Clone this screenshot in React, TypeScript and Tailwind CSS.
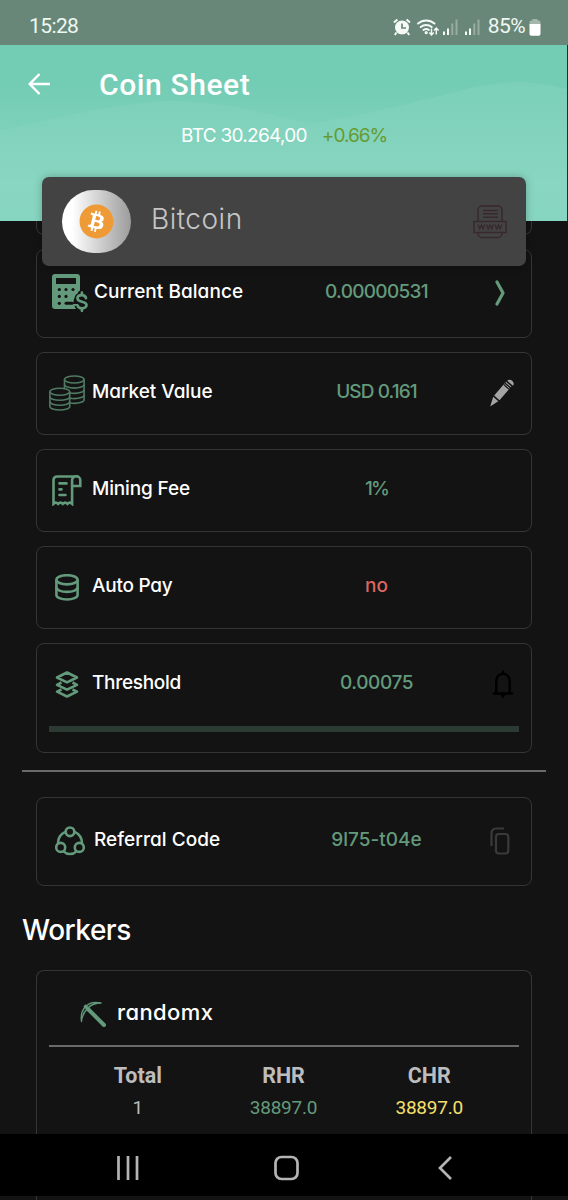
import type { ReactNode } from "react";
import { FaBitcoin } from "react-icons/fa";

const GREEN = "#649a7c";

function CalculatorIcon() {
  return (
    <svg viewBox="0 0 38 40" className="h-10 w-[38px] shrink-0" fill="none">
      <path
        fill={GREEN}
        fillRule="evenodd"
        d="M4 1h22a3 3 0 0 1 3 3v13.500l-2 1.500v3l-4 4-1 5h4v5H4a3 3 0 0 1-3-3V4a3 3 0 0 1 3-3Zm1 4v6h20V5H5Z"
      />
      <g fill="#131313">
        <circle cx="8.300" cy="16.500" r="1.600" />
        <circle cx="15" cy="16.500" r="1.600" />
        <circle cx="22" cy="16.500" r="1.600" />
        <circle cx="8.300" cy="23.400" r="1.600" />
        <circle cx="15" cy="23.400" r="1.600" />
        <circle cx="8.300" cy="30.300" r="1.600" />
        <rect x="13.500" y="28.800" width="9" height="3" rx="1.500" />
      </g>
      <path
        id="dollar"
        stroke="#131313"
        strokeWidth="6"
        d="M35 25.200c-.5-2-2.200-3-4.300-3-2.400 0-4.200 1.300-4.200 3.300 0 4.600 9 1.800 9 6.600 0 2-2 3.300-4.400 3.300-2.300 0-4.200-1-4.700-3.100"
      />
      <path
        stroke={GREEN}
        strokeWidth="2.700"
        strokeLinecap="round"
        d="M35 25.200c-.5-2-2.200-3-4.300-3-2.400 0-4.200 1.300-4.200 3.300 0 4.600 9 1.800 9 6.600 0 2-2 3.300-4.400 3.300-2.300 0-4.200-1-4.700-3.100M30.900 22v-2.300M30.900 35.600v2.200"
      />
    </svg>
  );
}

function CoinsIcon() {
  return (
    <svg viewBox="0 0 36 36" className="size-9" fill="none" stroke="#4f7a62" strokeWidth="1.600">
      <ellipse cx="25.300" cy="4.500" rx="9.800" ry="3.500" />
      <path d="M15.500 4.500V13M35.100 4.500v20.300c0 2-4.400 3.600-9.800 3.600-1.500 0-3-.1-4.300-.4" />
      <path d="M15.500 9.600c0 2 4.400 3.500 9.800 3.500s9.800-1.500 9.800-3.500M21 18c1.300.3 2.800.4 4.300.4 5.400 0 9.800-1.600 9.800-3.600M21 23.200c1.300.3 2.800.4 4.300.4 5.400 0 9.800-1.600 9.800-3.600" />
      <ellipse cx="10.800" cy="16.800" rx="9.900" ry="3.500" />
      <path d="M.9 16.800v14.600C.9 33.400 5.300 35 10.800 35s9.900-1.600 9.900-3.600V16.800" />
      <path d="M.9 21.700c0 2 4.400 3.600 9.900 3.600s9.900-1.600 9.900-3.600M.9 26.600c0 2 4.400 3.600 9.900 3.600s9.900-1.600 9.900-3.600" />
    </svg>
  );
}

function ReceiptIcon() {
  return (
    <svg viewBox="0 0 30 31" className="h-[31px] w-[30px]" fill="none" stroke={GREEN} strokeWidth="2.600">
      <path d="M25 1.500H5a3.500 3.500 0 0 0-3.500 3.500v23.800c1.600-1.600 3-1.600 4.600 0 1.600-1.600 3.100-1.600 4.700 0 1.600-1.600 3.100-1.600 4.700 0 1.500-1.600 3-1.600 4.600 0V5.500a4 4 0 0 1 8.200-.5v6h-8" />
      <path strokeLinecap="round" d="M7.500 8.400h7M7.500 14.400h2M7.500 20h6" />
    </svg>
  );
}

function DatabaseIcon() {
  return (
    <svg viewBox="0 0 24 27" className="h-[27px] w-6" fill="none" stroke={GREEN} strokeWidth="2.600">
      <ellipse cx="12" cy="5.800" rx="10.600" ry="4.600" />
      <path d="M1.400 5.800v15.100c0 2.600 4.700 4.600 10.600 4.600s10.600-2 10.600-4.600V5.800" />
      <path d="M1.400 13.300c0 2.600 4.700 4.600 10.600 4.600s10.600-2 10.600-4.600" />
    </svg>
  );
}

function LayersIcon() {
  return (
    <svg viewBox="0 0 24 27" className="h-[27px] w-6" fill="none" stroke={GREEN} strokeWidth="2.600" strokeLinejoin="round">
      <path d="M12 1.500 22 6.500 12 11.300 2 6.500Z" />
      <path d="M6.500 11.500 2 13.800l10 4.800 10-4.800-4.500-2.300" />
      <path d="M6.500 18.500 2 20.700l10 4.800 10-4.800-4.500-2.200" />
    </svg>
  );
}

function ReferralIcon() {
  return (
    <svg viewBox="0 0 30 30" className="size-[30px]" fill="none" stroke={GREEN} strokeWidth="2.600">
      <circle cx="15" cy="5.800" r="4.300" />
      <circle cx="5.700" cy="21.400" r="4.500" />
      <circle cx="24.300" cy="21.400" r="4.500" />
      <path d="M10.800 5.600C6 7.800 3 12 3 17.200M19.200 5.600C24 7.800 27 12 27 17.200M8.500 25.300c3.500 3.500 9.500 3.500 13 0" />
    </svg>
  );
}

function ChevronIcon() {
  return (
    <svg viewBox="0 0 12 26" className="mr-1 h-[26px] w-3" fill="none" stroke={GREEN} strokeWidth="3.200" strokeLinecap="round" strokeLinejoin="round">
      <path d="M3 2 9 13 3 24" />
    </svg>
  );
}

function PencilIcon() {
  return (
    <svg viewBox="0 0 24 28" className="-mt-0.5 h-7 w-6" fill="#a3a3a3">
      <path d="M.2 27.500 3.200 17.800 8.300 22.200Z" />
      <path d="M4.200 16.500 13.600 5.500 19 10.200 9.500 21.200Z" />
      <path d="m15.300 3.600.7-.8 5.400 4.700-.7.8Z" />
      <path d="M17.200 1.800c2.800-3 8.500 1.500 5.800 4.900Z" />
      <path stroke="#a3a3a3" strokeWidth="1" d="m14.200 4.700 5.400 4.700" />
      <path stroke="#131313" strokeWidth=".9" d="m13.800 6 4.900 4.300M15 4.200l5.200 4.500" />
    </svg>
  );
}

function BellIcon() {
  return (
    <svg viewBox="0 0 22 30" className="-mt-0.5 ml-0.5 h-[30px] w-[22px]" fill="none" stroke="#000" strokeWidth="2.500">
      <path d="M4.300 24V12.800C4.300 7.800 7 4.700 11 4.700s6.700 3.100 6.700 8.100V24" />
      <path strokeLinecap="round" d="M2 24.500h18" />
      <path fill="#000" stroke="none" d="M11 .8 13.300 5H8.700ZM8.300 25.500h5.400L11 29.500Z" />
    </svg>
  );
}

function CopyIcon() {
  return (
    <svg viewBox="0 0 20 28" className="mr-1 h-7 w-5" fill="none" stroke="#3a3a3a" strokeWidth="2.200">
      <rect x="6" y="7" width="12.300" height="19.500" rx="3" />
      <path d="M1.500 19V6a4.500 4.500 0 0 1 4.500-4.500h8" />
    </svg>
  );
}

function WebsiteIcon() {
  return (
    <svg viewBox="0 0 34 34" className="h-[34px] w-[34px]" fill="none" stroke="#38292f" strokeWidth="1.500">
      <path d="M5 16.500V5a4 4 0 0 1 4-4h16a4 4 0 0 1 4 4v11.500M5 27.500v1a4 4 0 0 0 4 4h16a4 4 0 0 0 4-4v-1" />
      <rect x="1" y="16.500" width="32" height="11" />
      <path d="M10 5.500h15M10 8.800h15M10 12.200h15" />
      <path
        strokeWidth="1.300"
        d="m5 19.500 1.700 4.500 1.700-4 1.700 4 1.700-4.500M13.500 19.500l1.700 4.500 1.700-4 1.700 4 1.700-4.500M22 19.500l1.700 4.500 1.700-4 1.700 4 1.700-4.500"
      />
    </svg>
  );
}

function PickaxeIcon() {
  return (
    <svg viewBox="0 0 27 27" className="mt-0.5 size-[27px]" fill="none" stroke={GREEN}>
      <path strokeWidth="4" strokeLinecap="round" d="M7.500 7.500 24 24" />
      <path strokeWidth="1.300" fill="#223a2c" strokeLinejoin="round" d="M1.500 20.500C.5 14 2.500 8.500 5.500 5.500S13.500.5 21 2C15 2 11 4 7.800 7.200S2 14.500 1.500 20.500Z" />
      <path strokeWidth="3" d="m4.300 4.500 4 3.500" />
    </svg>
  );
}

function StatusBar() {
  return (
    <div className="flex h-[45px] items-center justify-between bg-[#688778] pt-[9px] pr-[27px] pl-[29px] font-[Roboto] text-[21px] text-[#f0f7f3]">
      <span className="tracking-[-0.6px]">15:28</span>
      <div className="flex items-center">
        <svg viewBox="0 0 88 18" className="mr-[7px] h-[18px] w-[88px]" fill="none">
          <circle cx="9" cy="9.500" r="7" fill="#f5faf7" />
          <path d="M3.500 14.500 1.800 17M14.500 14.500l1.700 2.500M.9 4.500l3.500-3M17 4.500l-3.500-3" stroke="#f5faf7" strokeWidth="2" />
          <path d="M9 5.500V10h4" stroke="#688778" strokeWidth="1.700" />
          <g stroke="#f5faf7" strokeWidth="2" strokeLinecap="round">
            <path d="M25 5.500a12.500 12.500 0 0 1 16.500 0M27.700 9a8.500 8.500 0 0 1 11 0M30.500 12a4.500 4.500 0 0 1 5.500 0" />
          </g>
          <circle cx="33.200" cy="14.700" r="1.600" fill="#f5faf7" />
          <path d="M38.500 10.500v6M36.300 14.500l2.200 2.500 2.200-2.500M43.300 16.500v-6M41 12.500l2.300-2.500 2.300 2.500" stroke="#f5faf7" strokeWidth="1.400" />
          <path d="M51 13.500V17M55 10.500V17" stroke="#f5faf7" strokeWidth="2" />
          <path d="M59.300 5.500V17M63.500 1.500V17" stroke="#98aca2" strokeWidth="2" />
          <path d="M73 13.500V17M77 10.500V17" stroke="#f5faf7" strokeWidth="2" />
          <path d="M81.300 5.500V17M85.500 1.500V17" stroke="#98aca2" strokeWidth="2" />
        </svg>
        <span className="tracking-[-0.6px]">85%</span>
        <svg viewBox="0 0 12 17" className="ml-1 h-[17px] w-3">
          <path fill="#a5b6ad" d="M3.500 0h5v1.500H10A1.500 1.500 0 0 1 11.500 3v3H.5V3A1.500 1.500 0 0 1 2 1.500h1.500Z" />
          <path fill="#fff" d="M.5 5h11v10A1.700 1.700 0 0 1 9.800 16.700H2.200A1.700 1.700 0 0 1 .5 15Z" />
        </svg>
      </div>
    </div>
  );
}

function Header() {
  return (
    <header className="h-[221px]">
      <StatusBar />
      <div className="relative h-44 border-r border-[#1d3029] bg-linear-to-b from-[#73ccb4] from-20% to-[#87d6c1] to-80% text-white">
        <svg viewBox="0 0 567 176" preserveAspectRatio="none" className="absolute inset-0 h-full w-full">
          <defs>
            <linearGradient id="wave" x1="0" y1="0" x2="0" y2="1">
              <stop offset="0" stopColor="#fff" stopOpacity=".06" />
              <stop offset="1" stopColor="#fff" stopOpacity="0" />
            </linearGradient>
          </defs>
          <path fill="url(#wave)" d="M0 86C50 74 100 62 150 57s110 9 160 22C390 65 430 53 475 42c40-8 65-5 92 2v132H0Z" />
        </svg>
        <div className="relative flex h-[79px] items-center pl-7">
          <svg viewBox="0 0 22 22" className="-mt-0.5 h-[22px] w-[22px]" fill="none" stroke="#fff" strokeWidth="2.500">
            <path d="M22 11H2M11.500 1 1.700 11l9.800 10" />
          </svg>
          <h1 className="ml-[49px] font-[Roboto] text-[30px] font-medium tracking-[0.6px]">Coin Sheet</h1>
        </div>
        <p className="relative flex gap-4 pl-[181px] text-[19px] leading-6">
          <span className="tracking-[-0.7px]">BTC 30.264,00</span>
          <span className="-ml-px tracking-[-1px] text-[#679b32]">+0.66%</span>
        </p>
      </div>
    </header>
  );
}

function CoinCard() {
  return (
    <div className="absolute top-[177px] left-[42px] z-10 flex h-[89px] w-[484px] items-center rounded-[7px] bg-[#434343] pr-[19px] pl-5 shadow-[0_0_8px_rgba(0,0,0,0.25)]">
      <div className="flex h-[63px] w-[69px] items-center justify-center rounded-[32px] bg-linear-to-r from-white from-15% to-[#9c9c9c]">
        <span className="rounded-full bg-[radial-gradient(circle,white_60%,transparent_62%)]">
          <FaBitcoin className="size-[35px] text-[#ee9a37]" />
        </span>
      </div>
      <h2 className="ml-5 flex-1 pb-1.5 text-[28px] font-[350] tracking-[0.5px] text-[#c6c6c6]">Bitcoin</h2>
      <WebsiteIcon />
    </div>
  );
}

type RowProps = {
  icon: ReactNode;
  label: string;
  labelClass: string;
  value: string;
  valueClass?: string;
  action?: ReactNode;
  wide?: boolean;
  children?: ReactNode;
};

function InfoCard({ icon, label, labelClass, value, valueClass = "text-[#649a7c]", action, wide, children }: RowProps) {
  return (
    <section className="rounded-lg border border-[#353535]">
      <div
        className={
          wide
            ? "grid h-[87px] grid-cols-[57px_186px_193px_58px] items-center pb-[3px]"
            : "grid h-[81px] grid-cols-[55px_188px_193px_58px] items-center pb-[3px]"
        }
      >
        <span className={wide ? "mt-px flex w-9 translate-x-[15px] justify-center" : "mt-0.5 flex w-9 translate-x-3 justify-center"}>{icon}</span>
        <span className={"text-[19px] font-medium whitespace-nowrap text-white " + labelClass}>{label}</span>
        <span className={"text-center text-[19px] font-[450] whitespace-nowrap " + valueClass}>{value}</span>
        <span className={wide ? "mt-px flex justify-center" : "mt-[3px] flex justify-center"}>{action}</span>
      </div>
      {children}
    </section>
  );
}

const STATS = [
  { head: "Total", value: "1", color: "text-[#bdbdbd]" },
  { head: "RHR", value: "38897.0", color: "text-[#649a7c]" },
  { head: "CHR", value: "38897.0", color: "text-[#f6e06c]" },
];

function Workers() {
  return (
    <>
      <h2 className="mt-[25px] ml-[22px] h-[59px] text-[28px] leading-[38px] font-medium tracking-[-0.5px] text-white">Workers</h2>
      <section className="mx-9 h-[260px] rounded-t-lg border border-b-0 border-[#353535] px-3 pt-7">
        <div className="flex h-[46px] items-start pl-[31px]">
          <PickaxeIcon />
          <h3 className="mt-px ml-2.5 text-[22px] leading-6 font-medium tracking-[0.4px] text-white">randomx</h3>
        </div>
        <div className="grid grid-cols-3 border-t-2 border-[#6a6868] pt-3.5 pr-[17px] pl-4 text-center font-[Roboto]">
          {STATS.map((s) => (
            <div key={s.head}>
              <div className="text-[21.5px] leading-[30px] font-bold text-[#bdbdbd]">{s.head}</div>
              <div className={"mt-[3px] text-[19px] leading-7 tracking-[-0.25px] " + s.color}>{s.value}</div>
            </div>
          ))}
        </div>
      </section>
    </>
  );
}

function NavBar() {
  return (
    <nav className="absolute top-[1134px] left-0 z-10 flex h-[62px] w-full items-center bg-black pt-1.5">
      <svg viewBox="0 0 22 24" className="ml-[117px] h-6 w-[22px]" stroke="#b4b4b4" strokeWidth="2.700">
        <path d="M1.500 0v24M11 0v24M20 0v24" />
      </svg>
      <svg viewBox="0 0 26 26" className="ml-[135px] size-[26px]" fill="none" stroke="#b4b4b4" strokeWidth="2.700">
        <rect x="1.500" y="2" width="22" height="22" rx="6" />
      </svg>
      <svg viewBox="0 0 14 24" className="ml-[138px] h-6 w-3.5" fill="none" stroke="#b4b4b4" strokeWidth="2.700">
        <path d="M13 1 2 12 13 23" />
      </svg>
    </nav>
  );
}

export default function App() {
  return (
    <div className="relative h-[1200px] w-[568px] overflow-hidden bg-[#131313] font-[Inter,sans-serif] [font-feature-settings:'cv11']">
      <Header />
      <CoinCard />

      <div className="mx-9 flex flex-col gap-3.5">
        <div className="h-3.5 rounded-b-lg border border-t-0 border-[#353535]" />
        <InfoCard
          wide
          icon={<CalculatorIcon />}
          label="Current Balance"
          labelClass="tracking-[0.05px]"
          value="0.00000531"
          valueClass="tracking-[-0.7px] text-[#649a7c]"
          action={<ChevronIcon />}
        />
        <InfoCard
          icon={<CoinsIcon />}
          label="Market Value"
          labelClass="tracking-[-0.05px]"
          value="USD 0.161"
          valueClass="tracking-[-0.9px] text-[#649a7c]"
          action={<PencilIcon />}
        />
        <InfoCard
          icon={<ReceiptIcon />}
          label="Mining Fee"
          labelClass="tracking-[-0.15px]"
          value="1%"
          valueClass="tracking-[-2px] text-[#649a7c]"
        />
        <InfoCard icon={<DatabaseIcon />} label="Auto Pay" labelClass="tracking-[-0.25px]" value="no" valueClass="text-[#dd6660]" />
        <InfoCard
          icon={<LayersIcon />}
          label="Threshold"
          labelClass="tracking-[-0.3px]"
          value="0.00075"
          valueClass="tracking-[-0.4px] text-[#649a7c]"
          action={<BellIcon />}
        >
          <div className="mx-3 mt-px mb-5 h-1.5 bg-[#2b3a33]" />
        </InfoCard>
      </div>

      <hr className="mx-[22px] mt-[17px] mb-[25px] border-t-2 border-[#6a6a6a]" />

      <div className="mx-9">
        <InfoCard
          wide
          icon={<ReferralIcon />}
          label="Referral Code"
          labelClass="tracking-[0.05px]"
          value="9l75-t04e"
          action={<CopyIcon />}
        />
      </div>

      <Workers />
      <NavBar />
    </div>
  );
}
